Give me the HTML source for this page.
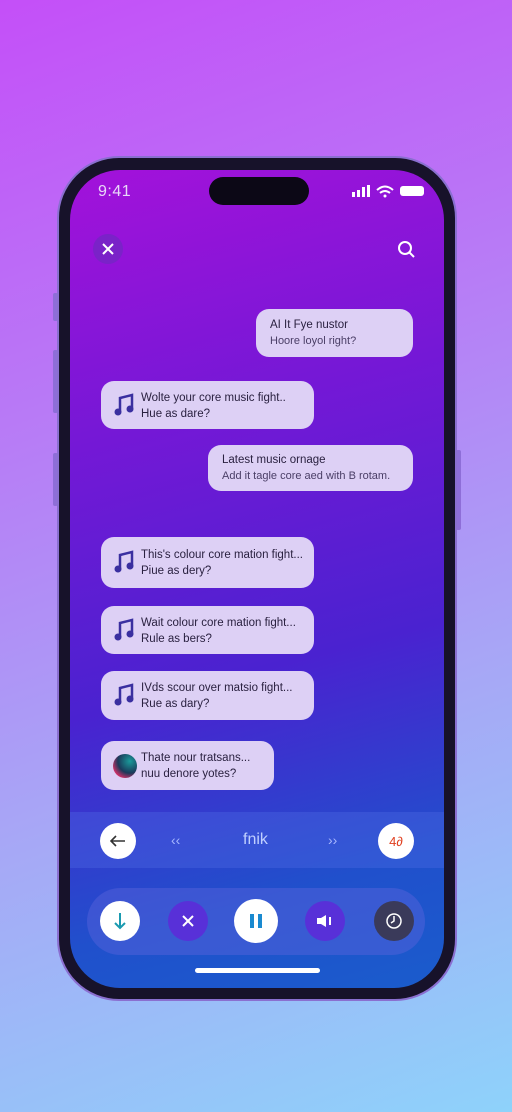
<!DOCTYPE html>
<html><head><meta charset="utf-8"><style>
*{margin:0;padding:0;box-sizing:border-box}
body{width:512px;height:1112px;overflow:hidden;position:relative;font-family:"Liberation Sans",sans-serif;
background:linear-gradient(160deg,#c44ff8 0%,#b77df6 35%,#a7a7f6 65%,#8ed2fa 100%)}
.frame{position:absolute;left:57px;top:156px;width:400px;height:845px;border-radius:62px;background:#17122a;border:2px solid #8a6fd0}
.screen{position:absolute;left:70px;top:170px;width:374px;height:818px;border-radius:50px;overflow:hidden;
background:linear-gradient(165deg,#a312da 0%,#7518d6 30%,#4a22d0 60%,#2050cc 85%,#1a5ccc 100%)}
.sb{position:absolute;background:#8e6ed8;border-radius:2px}
.island{position:absolute;left:139px;top:7px;width:100px;height:28px;border-radius:14px;background:#0c0816}
.time{position:absolute;left:28px;top:13px;color:#e8d8f8;font-size:16px;letter-spacing:0.5px}
.b{position:absolute;background:#ddd0f5;border-radius:13px;color:#2a2140;font-size:11.5px;line-height:16px}
.b .t{position:absolute;left:40px;top:9px;white-space:nowrap}
.b .t2{position:absolute;left:14px;top:9px;white-space:nowrap}
.note{position:absolute;left:12px;top:12px}
.circ{position:absolute;border-radius:50%;display:flex;align-items:center;justify-content:center}
</style></head><body>
<div class="sb" style="left:53px;top:293px;width:5px;height:28px"></div>
<div class="sb" style="left:53px;top:350px;width:5px;height:63px"></div>
<div class="sb" style="left:53px;top:453px;width:5px;height:53px"></div>
<div class="sb" style="left:456px;top:450px;width:5px;height:80px"></div>
<div class="frame"></div>
<div class="screen">
 <div class="time">9:41</div>
 <div class="island"></div>
 <svg style="position:absolute;left:280px;top:14px" width="80" height="14">
  <rect x="2" y="8" width="3" height="5" fill="#fff"/><rect x="7" y="6" width="3" height="7" fill="#fff"/><rect x="12" y="3" width="3" height="10" fill="#fff"/><rect x="17" y="1" width="3" height="12" fill="#fff"/>
  <path d="M27 6 Q35 -1 43 6" stroke="#fff" stroke-width="2" fill="none"/><path d="M30 9 Q35 5 40 9" stroke="#fff" stroke-width="2" fill="none"/><circle cx="35" cy="12" r="1.5" fill="#fff"/>
  <rect x="50" y="2" width="24" height="10" rx="3" fill="#fff"/>
 </svg>
 <div class="circ" style="left:23px;top:64px;width:30px;height:30px;background:#7a22c8">
  <svg width="14" height="14"><path d="M2 2L12 12M12 2L2 12" stroke="#fff" stroke-width="2"/></svg></div>
 <svg style="position:absolute;left:327px;top:70px" width="20" height="20"><circle cx="8" cy="8" r="6" stroke="#fff" stroke-width="2" fill="none"/><path d="M12.5 12.5L17 17" stroke="#fff" stroke-width="2"/></svg>

 <div class="b" style="left:186px;top:139px;width:157px;height:48px"><div class="t2" style="top:8px">AI It Fye nustor<br><span style="color:#4a3e66;font-size:11px">Hoore loyol right?</span></div></div>
 <div class="b" style="left:31px;top:211px;width:213px;height:48px"><svg class="note" width="22" height="24"><path d="M7 19V5L19 2V16" stroke="#3a2fa0" stroke-width="2.5" fill="none"/><circle cx="5" cy="19" r="3.5" fill="#3a2fa0"/><circle cx="17" cy="16" r="3.5" fill="#3a2fa0"/></svg><div class="t">Wolte your core music fight..<br>Hue as dare?</div></div>
 <div class="b" style="left:138px;top:275px;width:205px;height:46px"><div class="t2" style="top:7px">Latest music ornage<br><span style="color:#4a3e66;font-size:11px">Add it tagle core aed with B rotam.</span></div></div>
 <div class="b" style="left:31px;top:367px;width:213px;height:51px"><svg class="note" style="top:13px" width="22" height="24"><path d="M7 19V5L19 2V16" stroke="#3a2fa0" stroke-width="2.5" fill="none"/><circle cx="5" cy="19" r="3.5" fill="#3a2fa0"/><circle cx="17" cy="16" r="3.5" fill="#3a2fa0"/></svg><div class="t" style="top:10px">This's colour core mation fight...<br>Piue as dery?</div></div>
 <div class="b" style="left:31px;top:436px;width:213px;height:48px"><svg class="note" width="22" height="24"><path d="M7 19V5L19 2V16" stroke="#3a2fa0" stroke-width="2.5" fill="none"/><circle cx="5" cy="19" r="3.5" fill="#3a2fa0"/><circle cx="17" cy="16" r="3.5" fill="#3a2fa0"/></svg><div class="t">Wait colour core mation fight...<br>Rule as bers?</div></div>
 <div class="b" style="left:31px;top:501px;width:213px;height:49px"><svg class="note" width="22" height="24"><path d="M7 19V5L19 2V16" stroke="#3a2fa0" stroke-width="2.5" fill="none"/><circle cx="5" cy="19" r="3.5" fill="#3a2fa0"/><circle cx="17" cy="16" r="3.5" fill="#3a2fa0"/></svg><div class="t">IVds scour over matsio fight...<br>Rue as dary?</div></div>
 <div class="b" style="left:31px;top:571px;width:173px;height:49px"><div style="position:absolute;left:12px;top:13px;width:24px;height:24px;border-radius:50%;background:radial-gradient(circle at 70% 30%,#1a9a9a,#1a3a5a 50%,#e0306a 80%)"></div><div class="t" style="top:9px">Thate nour tratsans...<br>nuu denore yotes?</div></div>

 <div style="position:absolute;left:0;top:642px;width:374px;height:56px;background:rgba(80,110,230,0.35)"></div>
 <div class="circ" style="left:30px;top:653px;width:36px;height:36px;background:#fff"><svg width="16" height="12"><path d="M15 6H2M6 1L1 6L6 11" stroke="#333" stroke-width="1.6" fill="none"/></svg></div>
 <div style="position:absolute;left:101px;top:662px;color:#a8b8ff;font-size:14px">‹‹</div>
 <div style="position:absolute;left:173px;top:661px;color:#c0d0ff;font-size:16px">fnik</div>
 <div style="position:absolute;left:258px;top:662px;color:#a8b8ff;font-size:14px">››</div>
 <div class="circ" style="left:308px;top:653px;width:36px;height:36px;background:#fff;color:#e04020;font-size:13px">4∂</div>

 <div style="position:absolute;left:17px;top:718px;width:338px;height:67px;border-radius:34px;background:rgba(90,100,220,0.45)"></div>
 <div class="circ" style="left:30px;top:731px;width:40px;height:40px;background:#fff"><svg width="14" height="18"><path d="M7 1V16M2 11L7 16L12 11" stroke="#1a9ab0" stroke-width="2" fill="none"/></svg></div>
 <div class="circ" style="left:98px;top:731px;width:40px;height:40px;background:#5830d8"><svg width="14" height="14"><path d="M2 2L12 12M12 2L2 12" stroke="#fff" stroke-width="2"/></svg></div>
 <div class="circ" style="left:164px;top:729px;width:44px;height:44px;background:#fff"><svg width="14" height="16"><rect x="1" y="1" width="4" height="14" fill="#1a8ad0"/><rect x="9" y="1" width="4" height="14" fill="#1a8ad0"/></svg></div>
 <div class="circ" style="left:235px;top:731px;width:40px;height:40px;background:#5830d8"><svg width="18" height="14"><path d="M1 4H5L10 1V13L5 10H1Z" fill="#fff"/><path d="M14 3V11" stroke="#fff" stroke-width="2"/></svg></div>
 <div class="circ" style="left:304px;top:731px;width:40px;height:40px;background:#3a3a5a"><svg width="18" height="18"><circle cx="9" cy="9" r="7" stroke="#fff" stroke-width="1.5" fill="none"/><path d="M9 4V9L6 11" stroke="#fff" stroke-width="1.5" fill="none"/></svg></div>
 <div style="position:absolute;left:125px;top:798px;width:125px;height:5px;border-radius:3px;background:#fff"></div>
</div>
</body></html>
